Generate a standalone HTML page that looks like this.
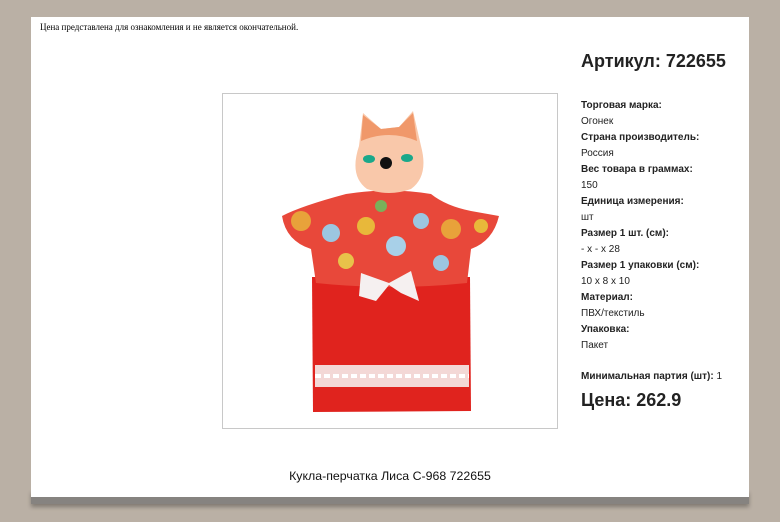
<!DOCTYPE html>
<html><head><meta charset="utf-8"><style>
body{margin:0;width:780px;height:522px;background:#bab0a5;position:relative;overflow:hidden;font-family:"Liberation Sans",sans-serif;color:#222}
.shadow{position:absolute;left:31px;top:490px;width:718px;height:14px;background:#868380;box-shadow:0 3px 4px rgba(0,0,0,.3)}
.page{position:absolute;left:31px;top:17px;width:718px;height:480px;background:#fff}
.note{position:absolute;left:40px;top:22px;font-family:"Liberation Serif",serif;font-size:9px;color:#000}
.img{position:absolute;left:222px;top:93px;width:334px;height:334px;border:1px solid #c8c8c8;background:#fff}
.art{position:absolute;left:581px;top:51px;font-size:18px;font-weight:bold;color:#222}
.props{position:absolute;left:581px;top:98px;font-size:10px;line-height:16px}
.props b{font-weight:bold}
.min{position:absolute;left:581px;top:371px;font-size:10px}
.price{position:absolute;left:581px;top:390px;font-size:18px;font-weight:bold}
.title{position:absolute;left:0;width:780px;top:469px;text-align:center;font-size:12px;color:#111;transform:scaleX(1.03)}
</style></head><body>
<div class="shadow"></div>
<div class="page"></div>
<div class="note">Цена представлена для ознакомления и не является окончательной.</div>
<div class="img">
<svg width="334" height="334" viewBox="222 93 334 334">
<path d="M311 276 L469 276 L470 410 L312 411 Z" fill="#e0231e"/>
<rect x="314" y="364" width="154" height="22" fill="#f3d8d6"/>
<path d="M314 375 h154" stroke="#fff" stroke-width="4" stroke-dasharray="6 3"/>
<path d="M345 193 Q388 186 430 193 Q445 205 470 210 L498 215 Q492 240 470 248 L466 282 Q390 290 315 282 L310 248 Q285 240 281 215 Q300 205 345 193 Z" fill="#e8483a"/>
<circle cx="300" cy="220" r="10" fill="#e8a23a"/><circle cx="330" cy="232" r="9" fill="#9cc6e0"/>
<circle cx="365" cy="225" r="9" fill="#e8b83a"/><circle cx="395" cy="245" r="10" fill="#a8d0e8"/>
<circle cx="420" cy="220" r="8" fill="#9cc6e0"/><circle cx="450" cy="228" r="10" fill="#e8a23a"/>
<circle cx="480" cy="225" r="7" fill="#e8b83a"/><circle cx="345" cy="260" r="8" fill="#e8c24a"/>
<circle cx="440" cy="262" r="8" fill="#9cc6e0"/><circle cx="380" cy="205" r="6" fill="#7ab05a"/>
<path d="M360 272 L388 282 L410 270 L418 300 L400 292 L388 284 L375 300 L358 295 Z" fill="#f5f0f0"/>
<path d="M358 145 L362 112 L380 128 L398 126 L412 110 L420 145 Q428 175 410 188 Q388 196 366 188 Q348 175 358 145 Z" fill="#f9c8aa"/>
<path d="M362 114 L380 128 L398 126 L412 112 L416 140 Q388 128 360 140 Z" fill="#f0986a"/>
<ellipse cx="368" cy="158" rx="6" ry="4" fill="#1aa88a"/><ellipse cx="406" cy="157" rx="6" ry="4" fill="#1aa88a"/>
<circle cx="385" cy="162" r="6" fill="#111"/>
</svg></div>
<div class="art">Артикул: 722655</div>
<div class="props">
<b>Торговая марка:</b><br>Огонек<br><b>Страна производитель:</b><br>Россия<br><b>Вес товара в граммах:</b><br>150<br><b>Единица измерения:</b><br>шт<br><b>Размер 1 шт. (см):</b><br>- x - x 28<br><b>Размер 1 упаковки (см):</b><br>10 x 8 x 10<br><b>Материал:</b><br>ПВХ/текстиль<br><b>Упаковка:</b><br>Пакет</div>
<div class="min"><b>Минимальная партия (шт):</b> 1</div>
<div class="price">Цена: 262.9</div>
<div class="title">Кукла-перчатка Лиса С-968 722655</div>
</body></html>
